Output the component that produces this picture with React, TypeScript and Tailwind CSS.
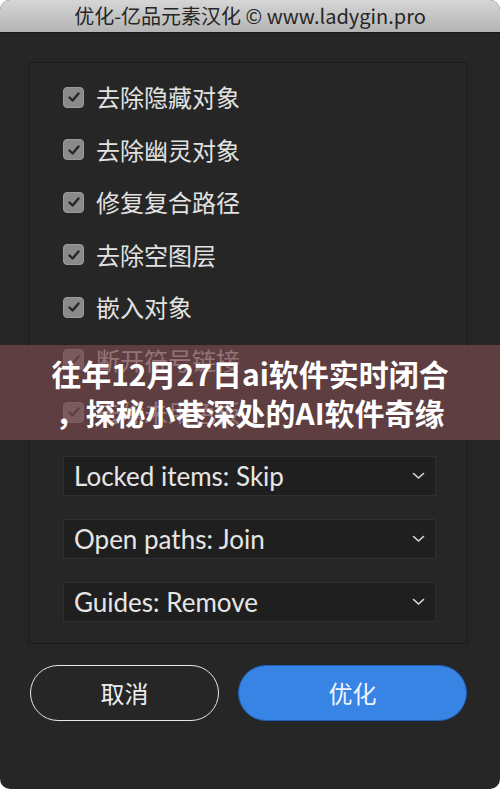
import React from "react";

const cjk = { fontFamily: '"Noto Sans CJK SC", "Noto Sans", sans-serif' };
const latin = { fontFamily: 'Lato, "Noto Sans CJK SC", sans-serif' };

const checks = ["去除隐藏对象", "去除幽灵对象", "修复复合路径", "去除空图层", "嵌入对象", "断开符号链接", "去除未用色板"];
const selects = ["Locked items: Skip", "Open paths: Join", "Guides: Remove"];

function Check() {
  return (
    <div className="w-[21px] h-[21px] rounded-[4px] bg-[#8a8a8a] border border-[#9a9a9a] flex items-center justify-center shrink-0">
      <svg width="14" height="14" viewBox="0 0 14 14" fill="none">
        <path d="M2.5 7.5 L5.6 10.5 L11.5 3.5" stroke="#262626" strokeWidth="2.4" strokeLinecap="round" strokeLinejoin="round" />
      </svg>
    </div>
  );
}

export default function App() {
  return (
    <div className="w-[500px] h-[789px] bg-white relative overflow-hidden">
      <div className="w-full h-full rounded-[10px] overflow-hidden bg-[#262626] flex flex-col">
        <div
          className="h-[33px] shrink-0 bg-gradient-to-b from-[#d6d6d6] to-[#b4b4b4] border-b border-[#1a1a1a] flex items-center justify-center text-[20px] text-[#262626]"
          style={cjk}
        >
          优化-亿品元素汉化 © www.ladygin.pro
        </div>
        <div className="ml-[28px] mr-[32px] mt-[29px] h-[582px] border border-[#1c1c1c] flex flex-col pl-[34px] pr-[31px] pt-[8px]">
          {checks.map((c) => (
            <div key={c} className="h-[52.5px] flex items-center gap-[12px]">
              <Check />
              <span className="text-[24px] text-[#e2e2e2] leading-none" style={cjk}>{c}</span>
            </div>
          ))}
          <div className="flex flex-col gap-[23px] mt-[17px]">
            {selects.map((s) => (
              <div key={s} className="h-[40px] bg-[#1f1f1f] border border-[#2f2f2f] flex items-center justify-between pl-[10px] pr-[10px]">
                <span className="text-[26px] text-[#e6e6e6] leading-none" style={latin}>{s}</span>
                <svg width="13" height="8" viewBox="0 0 13 8" fill="none">
                  <path d="M1.5 1.5 L6.5 6 L11.5 1.5" stroke="#dcdcdc" strokeWidth="1.6" strokeLinecap="round" strokeLinejoin="round" />
                </svg>
              </div>
            ))}
          </div>
        </div>
        <div className="flex mt-[21px] pl-[30px] gap-[19px]">
          <div className="w-[189px] h-[56px] rounded-full border-[1.5px] border-[#e8e8e8] flex items-center justify-center text-[24px] text-[#ececec]" style={cjk}>
            取消
          </div>
          <div className="w-[229px] h-[56px] rounded-full bg-[#3784e4] border border-[#1d5fb8] flex items-center justify-center text-[24px] text-[#eef4ff]" style={cjk}>
            优化
          </div>
        </div>
      </div>
      <div
        className="absolute left-0 top-[345px] w-full h-[95px] bg-[rgba(118,72,76,0.72)] flex flex-col items-center justify-center text-white font-bold text-[30px] leading-[39px]"
        style={cjk}
      >
        <div>往年12月27日ai软件实时闭合</div>
        <div>，探秘小巷深处的AI软件奇缘</div>
      </div>
    </div>
  );
}
